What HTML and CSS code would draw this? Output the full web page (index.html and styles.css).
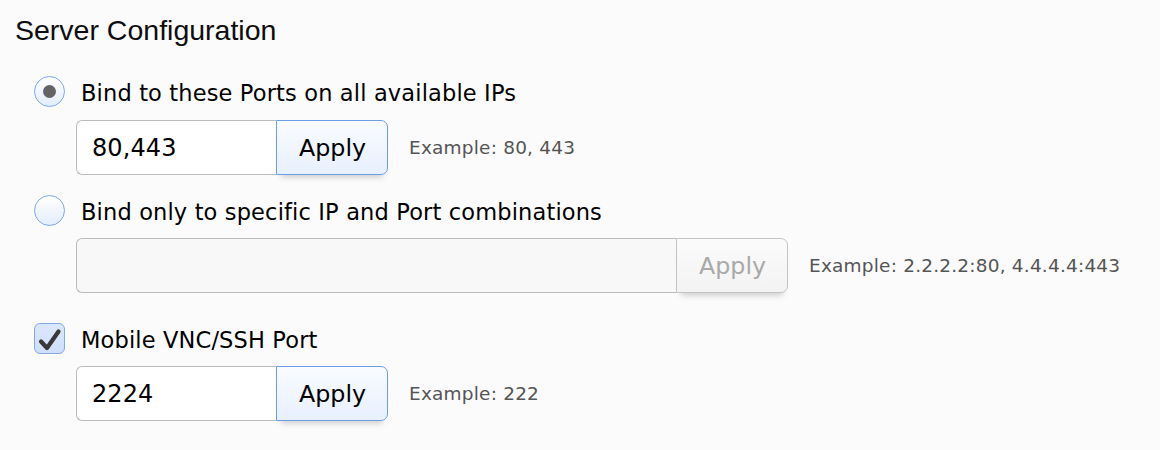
FILE: index.html
```html
<!DOCTYPE html>
<html>
<head>
<meta charset="utf-8">
<title>Server Configuration</title>
<link rel="stylesheet" href="styles.css">
</head>
<body>
<div class="panel">
  <h1 class="title">Server Configuration</h1>

  <div class="option opt-first">
    <span class="radio checked"><span class="dot"></span></span>
    <span class="label">Bind to these Ports on all available IPs</span>
  </div>
  <div class="field-row fr-first">
    <input class="field short" type="text" value="80,443">
    <button class="apply">Apply</button>
    <span class="example">Example: 80, 443</span>
  </div>

  <div class="option opt-second">
    <span class="radio"></span>
    <span class="label">Bind only to specific IP and Port combinations</span>
  </div>
  <div class="field-row fr-second">
    <input class="field long disabled" type="text" value="" disabled>
    <button class="apply disabled" disabled>Apply</button>
    <span class="example">Example: 2.2.2.2:80, 4.4.4.4:443</span>
  </div>

  <div class="option opt-third">
    <span class="checkbox">
      <svg width="31" height="31" viewBox="0 0 31 31"><path d="M7 18.5 L13 25 L24.5 8.5" fill="none" stroke="#383838" stroke-width="4.2" stroke-linecap="round" stroke-linejoin="round"/></svg>
    </span>
    <span class="label">Mobile VNC/SSH Port</span>
  </div>
  <div class="field-row fr-third">
    <input class="field short" type="text" value="2224">
    <button class="apply">Apply</button>
    <span class="example">Example: 222</span>
  </div>
</div>
</body>
</html>
```
FILE: styles.css
```css
html, body {
  margin: 0;
  padding: 0;
  background: #fbfbfb;
}
body {
  width: 1160px;
  height: 450px;
  overflow: hidden;
}
.panel {
  padding: 14px 0 0 17px;
}
.title {
  margin: 0 0 0 -2px;
  font-family: "Liberation Sans", Arial, sans-serif;
  font-weight: normal;
  font-size: 28.5px;
  line-height: 32px;
  color: #0d0d0d;
}
.option {
  display: flex;
  align-items: flex-start;
  margin-left: 17px;
}
.opt-first { margin-top: 30px; }
.opt-second { margin-top: 20px; }
.opt-third { margin-top: 30px; }

.radio {
  box-sizing: border-box;
  width: 31px;
  height: 31px;
  border-radius: 50%;
  border: 1.5px solid #7ea8ea;
  background: linear-gradient(#ffffff, #e4edfc);
  display: flex;
  align-items: center;
  justify-content: center;
  flex: none;
}
.dot {
  width: 13px;
  height: 13px;
  border-radius: 50%;
  background: #646464;
}
.checkbox {
  box-sizing: border-box;
  width: 31px;
  height: 31px;
  border-radius: 6px;
  border: 1.5px solid #82a9ea;
  background: linear-gradient(#dbe7fd, #cfdffb);
  flex: none;
  position: relative;
}
.checkbox svg {
  position: absolute;
  left: -1.5px;
  top: -1.5px;
}
.label {
  margin-left: 16px;
  margin-top: 2px;
  font-family: "DejaVu Sans", "Lucida Grande", sans-serif;
  font-size: 22.5px;
  letter-spacing: 0.15px;
  line-height: 31px;
  color: #000;
}
.field-row {
  display: flex;
  align-items: center;
  margin-left: 59px;
  height: 55px;
}
.fr-first { margin-top: 11px; }
.fr-second { margin-top: 10px; }
.fr-third { margin-top: 10px; }

.field {
  box-sizing: border-box;
  height: 55px;
  margin: 0;
  padding: 0 0 0 15px;
  border: 1px solid #bcbcbc;
  border-right: none;
  border-radius: 6px 0 0 6px;
  background: #ffffff;
  font-family: "DejaVu Sans", "Lucida Grande", sans-serif;
  font-size: 24px;
  letter-spacing: 0.1px;
  color: #000;
  outline: none;
}
.field.short { width: 200px; }
.field.long { width: 600px; }
.field.disabled { background: #f8f8f8; }

.apply {
  box-sizing: border-box;
  width: 112px;
  height: 55px;
  margin: 0;
  padding: 0 0 0 1px;
  border: 1px solid #6e9de8;
  border-radius: 0 7px 7px 0;
  background: linear-gradient(#f9fbff, #e8f0fe);
  font-family: "DejaVu Sans", "Lucida Grande", sans-serif;
  font-size: 23.8px;
  color: #000;
  box-shadow: 0 7px 6px -5px rgba(0, 0, 0, 0.2);
}
.apply.disabled {
  border-color: #c4c4c4;
  background: linear-gradient(#fbfbfb, #f3f3f3);
  color: #a9a9a9;
}
.example {
  margin-left: 21px;
  font-family: "DejaVu Sans", "Lucida Grande", sans-serif;
  font-size: 18.5px;
  letter-spacing: 0.2px;
  color: #555;
}
```
